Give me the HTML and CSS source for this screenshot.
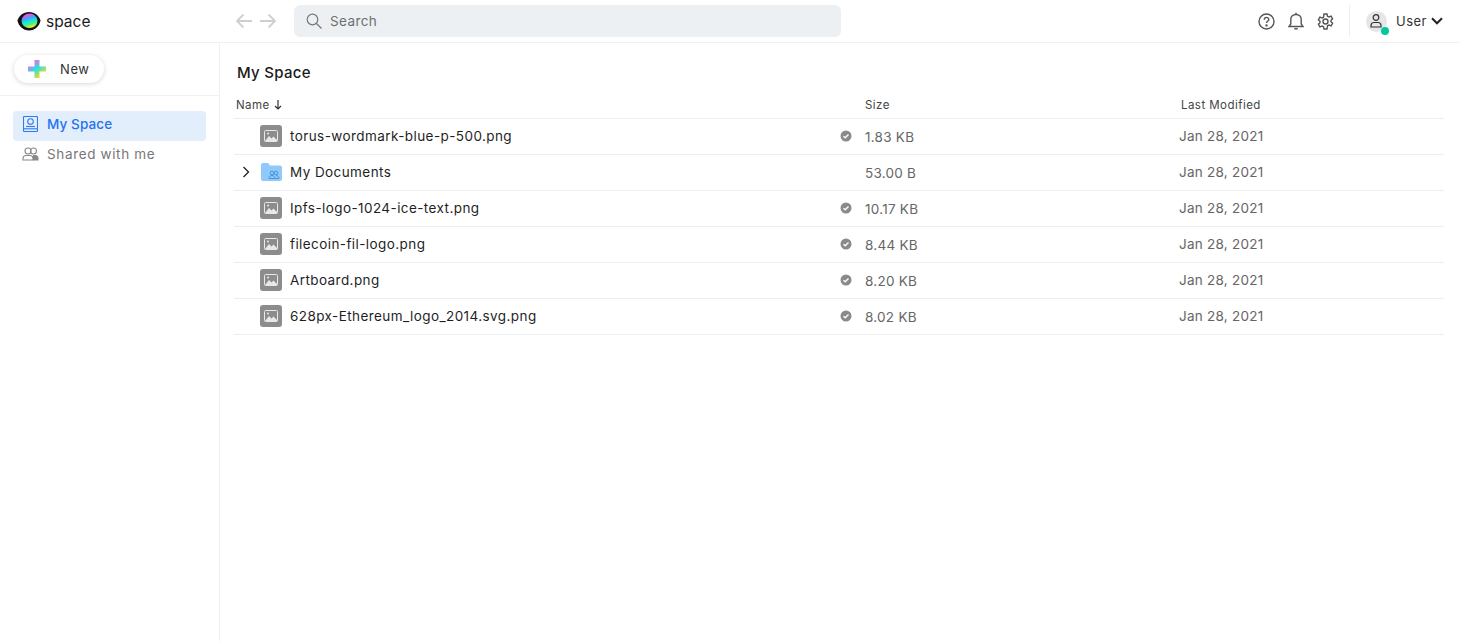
FILE: index.html
```html
<!DOCTYPE html>
<html>

<head>
    <meta charset="utf-8">
    <title>Space</title>
    <link rel="stylesheet" href="styles.css">
</head>

<body>
    <svg width="0" height="0" class="defs">
        <defs>
            <linearGradient id="logoFill" x1="0.3" y1="0" x2="0.6" y2="1">
                <stop offset="0.1" stop-color="#f04fe0"/>
                <stop offset="0.35" stop-color="#3fa5ff"/>
                <stop offset="0.55" stop-color="#12ecd0"/>
                <stop offset="0.75" stop-color="#4cf08a"/>
                <stop offset="0.95" stop-color="#ffee1a"/>
            </linearGradient>
            <linearGradient id="plusFill" x1="0" y1="0" x2="0.75" y2="1">
                <stop offset="0.2" stop-color="#fb62ee"/>
                <stop offset="0.55" stop-color="#1fe8de"/>
                <stop offset="0.9" stop-color="#ffd21f"/>
            </linearGradient>
            <symbol id="image-file" viewBox="0 0 22 22">
                <rect width="22" height="22" rx="3" fill="#8c8c8c"/>
                <rect x="4.500" y="5.500" width="13" height="11" rx="1" fill="none" stroke="#e8e8e8" stroke-width="1"/>
                <path d="M5 16l4-5 2.500 2.500 2-2 3.500 3.500V16z" fill="#e8e8e8"/>
                <circle cx="8" cy="8.500" r="1" fill="#e8e8e8"/>
            </symbol>
            <symbol id="check-badge" viewBox="0 0 12 12">
                <circle cx="6" cy="6" r="5.500" fill="#8a8a8a"/>
                <path d="M3.500 6.200l1.700 1.600 3.300-3.300" fill="none" stroke="#fff" stroke-width="1.300"/>
            </symbol>
        </defs>
    </svg>

    <header class="topbar">
        <div class="brand">
            <svg class="logo" width="24" height="20" viewBox="0 0 24 20">
                <path d="M0.500 9.500C2 5 6 1 12 1s10 4 11.500 8.500C22.500 15 18 19.500 12 19.500S1.500 15 0.500 9.500z" fill="#111"/>
                <ellipse cx="12.500" cy="9.800" rx="8" ry="7.300" fill="url(#logoFill)"/>
            </svg>
            <span class="brand-name">space</span>
        </div>
        <div class="history">
            <svg width="18" height="16" viewBox="0 0 18 16" fill="none" stroke="#cfcfcf" stroke-width="1.800"><path d="M17 8H2M8.500 1.500L2 8l6.500 6.500"/></svg>
            <svg width="18" height="16" viewBox="0 0 18 16" fill="none" stroke="#cfcfcf" stroke-width="1.800"><path d="M1 8h15M9.500 1.500L16 8l-6.500 6.500"/></svg>
        </div>
        <div class="search">
            <svg width="16" height="16" viewBox="0 0 16 16" fill="none" stroke="#777" stroke-width="1.200"><circle cx="6.500" cy="6.500" r="5.300"/><path d="M10.500 10.500l5 5"/></svg>
            <span>Search</span>
        </div>
        <div class="top-actions">
            <svg width="17" height="17" viewBox="0 0 17 17" fill="none" stroke="#555" stroke-width="1.400"><circle cx="8.500" cy="8.500" r="7.500"/><path d="M6.300 6.700c0-3 4.500-3 4.500-.2 0 1.800-2.300 1.700-2.300 3.500"/><circle cx="8.500" cy="12.400" r=".5"/></svg>
            <svg width="16" height="19" viewBox="0 0 16 19" fill="none" stroke="#555" stroke-width="1.400"><path d="M1 14.500h14l-1.800-2.500V7.500C13.200 4.400 11 2.500 8 2.500S2.800 4.400 2.800 7.500V12z"/><path d="M8 .8v1.700M6.300 16.800h3.400"/></svg>
            <svg width="17" height="17" viewBox="0 0 17 17" fill="none" stroke="#555" stroke-width="1.400"><path d="M7 1h3l.5 2.200 1.500.8 2.100-.8 1.500 2.600-1.600 1.500v1.400l1.600 1.500-1.500 2.600-2.100-.8-1.500.8L10 16H7l-.5-2.200-1.500-.8-2.100.8L1.400 11.200 3 9.700V8.300L1.400 6.800 2.900 4.200 5 5l1.500-.8z"/><circle cx="8.500" cy="8.500" r="2.500"/></svg>
        </div>
        <div class="user">
            <div class="avatar">
                <svg width="12" height="14" viewBox="0 0 12 14" fill="none" stroke="#333" stroke-width="1.200"><circle cx="6" cy="3.500" r="2.800"/><path d="M1 13v-1.500C1 9.500 2.500 8.500 4 8.500h4c1.500 0 3 1 3 3V13z"/></svg>
                <span class="status-dot"></span>
            </div>
            <span class="user-name">User</span>
            <svg width="12" height="8" viewBox="0 0 12 8" fill="none" stroke="#222" stroke-width="2"><path d="M1 1.300l5 5 5-5"/></svg>
        </div>
    </header>

    <div class="layout">
        <aside class="sidebar">
            <div class="new-wrap">
                <button class="new-btn" type="button">
                    <svg width="18" height="18" viewBox="0 0 18 18"><path d="M6.500 0h5v6.500H18v5h-6.500V18h-5v-6.500H0v-5h6.500z" fill="url(#plusFill)"/></svg>
                    <span>New</span>
                </button>
            </div>
            <nav class="nav">
                <a class="nav-item active">
                    <svg class="space-icon" width="15" height="16" viewBox="0 0 15 16" fill="none" stroke="#2f7bf0" stroke-width="1.100"><rect x=".5" y=".5" width="14" height="15" rx="1"/><path d="M.5 12.800h14"/><circle cx="7.500" cy="5.500" r="2.800"/><path d="M3 10.500h9"/></svg>
                    <span>My Space</span>
                </a>
                <a class="nav-item">
                    <svg width="17" height="14" viewBox="0 0 17 14" fill="none" stroke="#888" stroke-width="1.100"><circle cx="6" cy="4" r="3"/><circle cx="11.500" cy="4" r="3"/><path d="M1 13v-1.500C1 9.500 2.500 8.500 4 8.500h4c1.500 0 3 1 3 3V13z"/><path d="M11 8.500h2c1.500 0 3 1 3 3V13h-5" fill="#888"/></svg>
                    <span>Shared with me</span>
                </a>
            </nav>
        </aside>

        <main class="content">
            <h1 class="title">My Space</h1>
            <div class="table">
                <div class="row head">
                    <div class="col-name">Name <svg width="8" height="10" viewBox="0 0 8 10" fill="none" stroke="#333" stroke-width="1.200"><path d="M4 0v9M1 6l3 3 3-3"/></svg></div>
                    <div class="col-size">Size</div>
                    <div class="col-date">Last Modified</div>
                </div>
                <div class="row">
                    <div class="col-name"><span class="toggle"></span><svg class="file-icon" width="22" height="22"><use href="#image-file"/></svg><span class="file-name">torus-wordmark-blue-p-500.png</span><svg class="badge" width="12" height="12"><use href="#check-badge"/></svg></div>
                    <div class="col-size">1.83 KB</div>
                    <div class="col-date">Jan 28, 2021</div>
                </div>
                <div class="row">
                    <div class="col-name">
                        <span class="toggle"><svg width="8" height="12" viewBox="0 0 8 12" fill="none" stroke="#222" stroke-width="1.300"><path d="M1.500 1l5 5-5 5"/></svg></span>
                        <svg class="file-icon folder" width="21" height="18" viewBox="0 0 21 18"><path d="M0 2a2 2 0 0 1 2-2h5l2 2.500h10a2 2 0 0 1 2 2V16a2 2 0 0 1-2 2H2a2 2 0 0 1-2-2z" fill="#90c9fc"/><g fill="none" stroke="#4f93d8"><circle cx="11" cy="10" r="1.800"/><circle cx="15" cy="10" r="1.800"/><path d="M8 15.500c0-2 1.500-3 3-3s3 1 3 3zM14 15.500h4c0-2-1.500-3-3-3"/></g></svg>
                        <span class="file-name">My Documents</span>
                    </div>
                    <div class="col-size">53.00 B</div>
                    <div class="col-date">Jan 28, 2021</div>
                </div>
                <div class="row">
                    <div class="col-name"><span class="toggle"></span><svg class="file-icon" width="22" height="22"><use href="#image-file"/></svg><span class="file-name">Ipfs-logo-1024-ice-text.png</span><svg class="badge" width="12" height="12"><use href="#check-badge"/></svg></div>
                    <div class="col-size">10.17 KB</div>
                    <div class="col-date">Jan 28, 2021</div>
                </div>
                <div class="row">
                    <div class="col-name"><span class="toggle"></span><svg class="file-icon" width="22" height="22"><use href="#image-file"/></svg><span class="file-name">filecoin-fil-logo.png</span><svg class="badge" width="12" height="12"><use href="#check-badge"/></svg></div>
                    <div class="col-size">8.44 KB</div>
                    <div class="col-date">Jan 28, 2021</div>
                </div>
                <div class="row">
                    <div class="col-name"><span class="toggle"></span><svg class="file-icon" width="22" height="22"><use href="#image-file"/></svg><span class="file-name">Artboard.png</span><svg class="badge" width="12" height="12"><use href="#check-badge"/></svg></div>
                    <div class="col-size">8.20 KB</div>
                    <div class="col-date">Jan 28, 2021</div>
                </div>
                <div class="row">
                    <div class="col-name"><span class="toggle"></span><svg class="file-icon" width="22" height="22"><use href="#image-file"/></svg><span class="file-name">628px-Ethereum_logo_2014.svg.png</span><svg class="badge" width="12" height="12"><use href="#check-badge"/></svg></div>
                    <div class="col-size">8.02 KB</div>
                    <div class="col-date">Jan 28, 2021</div>
                </div>
            </div>
        </main>
    </div>
</body>

</html>
```

FILE: styles.css
```css
* {
box-sizing: border-box;
}

html, body {
height: 100%;
}

body {
margin: 0;
display: flex;
flex-direction: column;
font-family: Inter, "Liberation Sans", sans-serif;
font-size: 13.5px;
color: #1a1a1a;
background-color: #fff;
}

.defs {
display: block;
height: 0;
}

svg {
display: block;
flex-shrink: 0;
}

.topbar {
height: 43px;
flex-shrink: 0;
display: flex;
align-items: center;
border-bottom: 1px solid #f0f0f0;
}

.brand {
width: 235px;
padding-left: 17px;
display: flex;
align-items: center;
gap: 5px;
}

.brand-name {
font-size: 15.5px;
color: #1c1c1c;
}

.history {
width: 59px;
display: flex;
gap: 6px;
}

.search {
width: 547px;
height: 32px;
padding-left: 12px;
display: flex;
align-items: center;
gap: 8px;
background-color: #edf0f3;
border-radius: 6px;
color: #6f6f6f;
font-size: 13.5px;
letter-spacing: 0.4px;
}

.top-actions {
margin-left: auto;
display: flex;
align-items: center;
gap: 13px;
}

.user {
height: 32px;
margin-left: 15px;
padding: 0 16px;
border-left: 1px solid #eee;
display: flex;
align-items: center;
font-size: 13px;
letter-spacing: 0.5px;
color: #333;
}

.avatar {
position: relative;
width: 21px;
height: 21px;
margin-right: 9px;
border-radius: 50%;
background-color: #e6e6e6;
display: flex;
align-items: center;
justify-content: center;
}

.status-dot {
position: absolute;
right: -2px;
bottom: -3px;
width: 8px;
height: 8px;
border-radius: 50%;
background-color: #00c9a0;
}

.user-name {
margin-right: 4px;
}

.layout {
flex: 1;
display: flex;
min-height: 0;
}

.sidebar {
width: 220px;
flex-shrink: 0;
border-right: 1px solid #f0f0f0;
}

.new-wrap {
height: 53px;
padding: 12px 0 0 14px;
border-bottom: 1px solid #f0f0f0;
}

.new-btn {
width: 90px;
height: 28px;
padding: 0 0 0 14px;
display: flex;
align-items: center;
gap: 14px;
border: none;
border-radius: 14px;
background-color: #fff;
box-shadow: 0 1px 5px rgba(0, 0, 0, 0.16);
font-family: inherit;
font-size: 13px;
letter-spacing: 0.6px;
color: #333;
}

.nav {
padding: 15px 13px 0;
}

.nav-item {
height: 30px;
padding: 0 0 4px 9px;
display: flex;
align-items: center;
gap: 8px;
border-radius: 4px;
letter-spacing: 0.64px;
color: #777;
}

.nav-item.active {
background-color: #e2eefc;
color: #2673f0;
font-weight: 500;
letter-spacing: 0.1px;
}

.space-icon {
margin: 0 1px;
}

.content {
flex: 1;
padding: 0 15px 0 14px;
}

.title {
margin: 0;
padding: 21px 0 0 3px;
height: 49px;
font-size: 15px;
font-weight: 500;
line-height: 18px;
letter-spacing: 0.3px;
color: #1a1a1a;
}

.row {
height: 36px;
padding-bottom: 2px;
display: grid;
grid-template-columns: 631px 314px 1fr;
align-items: center;
border-bottom: 1px solid #eceff2;
color: #666;
letter-spacing: 0.25px;
}

.row.head {
height: 27px;
padding-bottom: 0;
font-size: 11.5px;
letter-spacing: 0.45px;
color: #444;
}

.col-name {
display: flex;
align-items: center;
}

.col-size {
padding-top: 2px;
}

.head .col-size {
padding-top: 0;
}

.head .col-name {
gap: 4px;
padding-left: 2px;
}

.head .col-date {
padding-left: 2px;
}

.toggle {
width: 26px;
padding-left: 8px;
flex-shrink: 0;
}

.file-icon {
width: 22px;
margin-right: 8px;
}

.file-icon.folder {
width: 21px;
margin: 0 8px 0 1px;
}

.file-name {
flex: 1;
letter-spacing: 0.42px;
color: #1f1f1f;
}

.badge {
margin-right: 13px;
}
```
